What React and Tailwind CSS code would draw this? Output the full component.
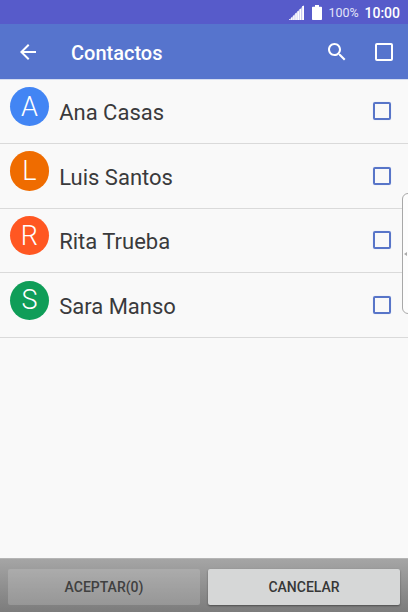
const contacts = [
  { name: 'Ana Casas', color: 'bg-[#4285f4]' },
  { name: 'Luis Santos', color: 'bg-[#ef6c00]' },
  { name: 'Rita Trueba', color: 'bg-[#ff5722]' },
  { name: 'Sara Manso', color: 'bg-[#0f9d58]' },
];

// Signal strength icon
const SignalIcon = () => (
  <svg className="w-[15px] h-[15px]" viewBox="0 0 15 15" fill="#fff">
    <path d="M0 15L15 0v15z" fillOpacity=".6" />
    <path d="M0 15v-.8h1.4v.8zM2.1 15v-2.5h1.4V15zM4.2 15v-4.6h1.4V15zM6.3 15V8.3h1.5V15zM8.4 15V6.2H10V15zM10.6 15V4h1.6v11zM13.2 15V1H15v14z" />
  </svg>
);

// Battery icon
const BatteryIcon = () => (
  <svg className="w-[10px] h-[15px]" viewBox="0 0 10 15" fill="#fff">
    <path d="M3 0h4v1.7h2.2q.8 0 .8.8v11.7q0 .8-.8.8H.8q-.8 0-.8-.8V2.5q0-.8.8-.8H3z" />
  </svg>
);

const BackIcon = () => (
  <svg className="w-6 h-6" viewBox="0 0 24 24" fill="#fff">
    <path d="M20 11H7.83l5.59-5.59L12 4l-8 8 8 8 1.41-1.41L7.83 13H20v-2z" />
  </svg>
);

const SearchIcon = () => (
  <svg className="w-6 h-6" viewBox="0 0 24 24" fill="#fff">
    <path d="M15.5 14h-.79l-.28-.27C15.41 12.59 16 11.11 16 9.5 16 5.91 13.09 3 9.5 3S3 5.91 3 9.5 5.91 16 9.5 16c1.61 0 3.09-.59 4.23-1.57l.27.28v.79l5 4.99L20.49 19l-4.99-5zm-6 0C7.01 14 5 11.99 5 9.5S7.01 5 9.5 5 14 7.01 14 9.5 11.99 14 9.5 14z" />
  </svg>
);

const ContactRow = ({ name, color }) => (
  <li className="flex h-[64.6px] items-start border-b border-[#dadada] pl-[9.7px] pr-[17px]">
    <span className={`mt-[7.3px] flex size-[39.5px] shrink-0 items-center justify-center rounded-full pt-px text-[27px] font-light leading-none text-white ${color}`}>
      {name[0]}
    </span>
    <span className="ml-[10px] mt-[20.6px] flex-1 whitespace-nowrap text-[22px] leading-[26px] text-[#3a3a3c]">{name}</span>
    <span className="mt-[22.5px] size-[18px] rounded-[2px] border-2 border-[#5875c8] shadow-[0_0_1px_#b9c8f0]" />
  </li>
);

export default function App() {
  return (
    <div className="relative flex h-[612px] w-[408px] flex-col overflow-hidden bg-[#f9f9f9] font-['Roboto',sans-serif]">
      {/* Status bar */}
      <div className="flex h-6 shrink-0 items-center justify-end bg-[#575bca] pr-2 text-white">
        <SignalIcon />
        <span className="ml-2 mr-[6px] flex">
          <BatteryIcon />
        </span>
        <span className="w-[29px] whitespace-nowrap pt-px text-[12.5px] leading-6 text-[#e2e4f8]">100%</span>
        <span className="ml-[7px] pt-px text-[14px] font-medium leading-6">10:00</span>
      </div>

      {/* App bar */}
      <header className="flex h-[55px] shrink-0 items-center bg-[#5674cd] pl-4 pr-[15px]">
        <BackIcon />
        <h1 className="ml-[31px] flex-1 pt-[2px] text-[20px] font-medium text-white">Contactos</h1>
        <SearchIcon />
        <span className="ml-[26.5px] size-[18px] rounded-[2px] border-2 border-white" />
      </header>

      {/* Contacts */}
      <ul className="flex-1 pt-[0.5px] shadow-[inset_0_1px_0_#d5dcf0]">
        {contacts.map((contact) => (
          <ContactRow key={contact.name} name={contact.name} color={contact.color} />
        ))}
      </ul>

      {/* Actions */}
      <footer className="flex h-[54px] shrink-0 gap-2 border-t border-[#b5b5b5] bg-linear-to-b from-[#a5a5a5] to-[#7c7c7c] px-2 pt-[10px]">
        <button className="h-9 flex-1 rounded-[2px] bg-[#d6d7d7]/25 text-[14px] font-medium text-[#404040]">ACEPTAR(0)</button>
        <button className="h-9 flex-1 rounded-[2px] bg-[#d6d7d7] text-[14px] font-medium text-[#373737] shadow-[0_1px_2px_rgba(0,0,0,0.4)]">CANCELAR</button>
      </footer>

      {/* Edge panel handle */}
      <div className="absolute -right-2 top-[193px] flex h-[121px] w-[14px] items-center rounded-[6px] border border-[#a8a8a8] bg-[#fdfdfd] pl-px">
        <svg className="w-[3px] h-[4px]" viewBox="0 0 3 4" fill="#aaa">
          <path d="M3 0v4L0 2z" />
        </svg>
      </div>
    </div>
  );
}
